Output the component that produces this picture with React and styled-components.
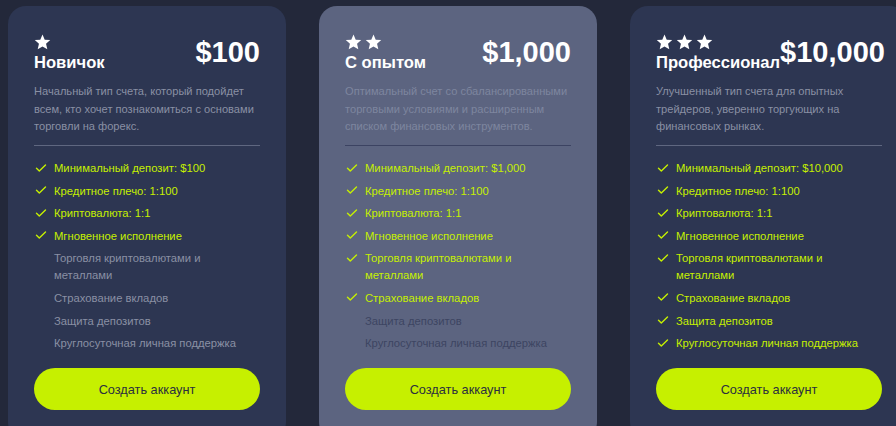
import React from 'react';
import styled, { createGlobalStyle } from 'styled-components';

const GlobalStyle = createGlobalStyle`
  html, body {
    margin: 0;
    padding: 0;
    background: #23283a;
    font-family: "Liberation Sans", Arial, sans-serif;
    overflow: hidden;
  }
`;

const plans = [
  {
    stars: 1,
    title: 'Новичок',
    price: '$100',
    text: 'Начальный тип счета, который подойдет всем, кто хочет познакомиться с основами торговли на форекс.',
    included: 4,
    deposit: '$100',
  },
  {
    stars: 2,
    title: 'С опытом',
    price: '$1,000',
    text: 'Оптимальный счет со сбалансированными торговыми условиями и расширенным списком финансовых инструментов.',
    included: 6,
    deposit: '$1,000',
    highlight: true,
  },
  {
    stars: 3,
    title: 'Профессионал',
    price: '$10,000',
    text: 'Улучшенный тип счета для опытных трейдеров, уверенно торгующих на финансовых рынках.',
    included: 8,
    deposit: '$10,000',
  },
];

const features = (deposit) => [
  `Минимальный депозит: ${deposit}`,
  'Кредитное плечо: 1:100',
  'Криптовалюта: 1:1',
  'Мгновенное исполнение',
  'Торговля криптовалютами и металлами',
  'Страхование вкладов',
  'Защита депозитов',
  'Круглосуточная личная поддержка',
];

const Star = () => (
  <svg width="17" height="16" viewBox="0 0 24 23">
    <path
      fill="#fff"
      d="M12 .8l3.2 7.3 7.9.7-6 5.3 1.8 7.8L12 17.8l-6.9 4.1 1.8-7.8-6-5.3 7.9-.7z"
    />
  </svg>
);

const Check = () => (
  <svg width="12" height="12" viewBox="0 0 12 12">
    <path d="M1.5 6.2l2.8 2.7L10.5 3" fill="none" stroke="#c6f000" strokeWidth="1.4" strokeLinecap="round" strokeLinejoin="round" />
  </svg>
);

const App = () => {
  return (
    <>
      <GlobalStyle />
      <Page>
        {plans.map((p) => (
          <Card key={p.title} $highlight={p.highlight}>
            <Header>
              <div>
                <Stars>
                  {Array.from({ length: p.stars }).map((_, i) => <Star key={i} />)}
                </Stars>
                <Title>{p.title}</Title>
              </div>
              <Price>{p.price}</Price>
            </Header>
            <Description $highlight={p.highlight}>{p.text}</Description>
            <Divider $highlight={p.highlight} />
            <Features>
              {features(p.deposit).map((f, i) => (
                <Feature key={f} $on={i < p.included} $highlight={p.highlight}>
                  <IconSlot>{i < p.included && <Check />}</IconSlot>
                  <span>{f}</span>
                </Feature>
              ))}
            </Features>
            <Button>Создать аккаунт</Button>
          </Card>
        ))}
      </Page>
    </>
  );
};

const Page = styled.div`
  display: grid;
  grid-template-columns: repeat(3, 278px);
  gap: 33px;
  padding: 6px 0 0 8px;
  width: 896px;
  height: 426px;
  box-sizing: border-box;
  overflow: hidden;
`;

const Card = styled.div`
  background: ${(p) => (p.$highlight ? '#5c6480' : '#2d3652')};
  border-radius: 18px;
  padding: 28px 26px 30px;
  display: flex;
  flex-direction: column;
`;

const Header = styled.div`
  display: flex;
  justify-content: space-between;
  align-items: center;
`;

const Stars = styled.div`
  display: flex;
  gap: 3px;
  height: 16px;
  margin-bottom: 2px;
`;

const Title = styled.h3`
  margin: 0;
  color: #fff;
  font-size: 16.6px;
  line-height: 22px;
  font-weight: 700;
`;

const Price = styled.div`
  color: #fff;
  font-size: 29px;
  font-weight: 700;
  line-height: 34px;
  margin-bottom: 4px;
`;

const Description = styled.p`
  margin: 9px 0 0;
  font-size: 11.1px;
  line-height: 17.5px;
  color: ${(p) => (p.$highlight ? '#7e869f' : '#8a90a4')};
`;

const Divider = styled.div`
  height: 1px;
  margin: 9px 0 14.5px;
  background: ${(p) => (p.$highlight ? '#3c4362' : '#5f6780')};
`;

const Features = styled.ul`
  list-style: none;
  margin: 0;
  padding: 0;
  display: flex;
  flex-direction: column;
  gap: 5.6px;
`;

const Feature = styled.li`
  display: flex;
  gap: 7px;
  font-size: 11.25px;
  line-height: 17px;
  color: ${(p) => (p.$on ? '#c6f000' : p.$highlight ? '#3d4462' : '#8a90a4')};
`;

const IconSlot = styled.span`
  flex: 0 0 12px;
  height: 15px;
  display: flex;
  align-items: center;
  margin-left: 1px;
`;

const Button = styled.button`
  margin-top: 16px;
  height: 42px;
  border: none;
  border-radius: 21px;
  background: #c6f000;
  color: #2a2f3f;
  font-family: "Liberation Sans", Arial, sans-serif;
  font-size: 12.75px;
  cursor: pointer;
`;

export default App;
